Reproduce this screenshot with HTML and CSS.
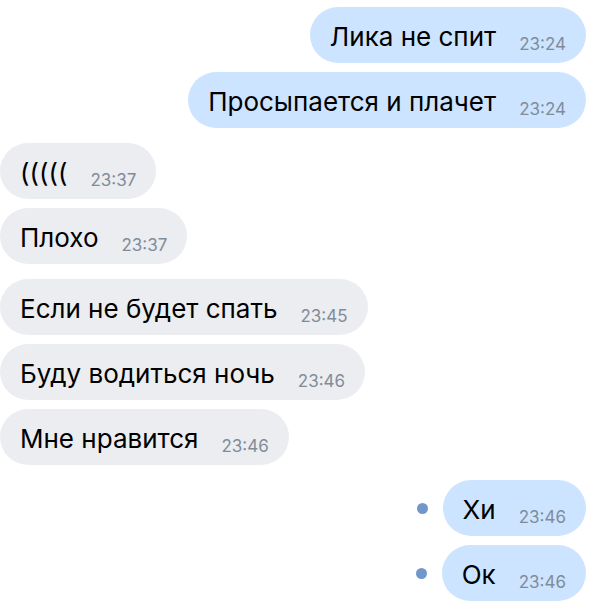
FILE: index.html
```html
<!DOCTYPE html>
<html lang="ru">
<head>
<meta charset="utf-8">
<link rel="stylesheet" href="styles.css">
</head>
<body>
<div class="chat">
  <div class="group">
    <div class="row out"><div class="bubble out-b"><span class="text">Лика не спит</span><span class="time">23:24</span></div></div>
    <div class="row out"><div class="bubble out-b"><span class="text">Просыпается и плачет</span><span class="time">23:24</span></div></div>
  </div>
  <div class="group">
    <div class="row in"><div class="bubble in-b"><span class="text">(((((</span><span class="time">23:37</span></div></div>
    <div class="row in"><div class="bubble in-b"><span class="text">Плохо</span><span class="time">23:37</span></div></div>
  </div>
  <div class="group">
    <div class="row in"><div class="bubble in-b"><span class="text">Если не будет спать</span><span class="time">23:45</span></div></div>
    <div class="row in"><div class="bubble in-b"><span class="text">Буду водиться ночь</span><span class="time">23:46</span></div></div>
    <div class="row in"><div class="bubble in-b"><span class="text">Мне нравится</span><span class="time">23:46</span></div></div>
  </div>
  <div class="group">
    <div class="row out"><span class="dot"></span><div class="bubble out-b"><span class="text">Хи</span><span class="time">23:46</span></div></div>
    <div class="row out"><span class="dot"></span><div class="bubble out-b"><span class="text">Ок</span><span class="time">23:46</span></div></div>
  </div>
</div>
</body>
</html>
```
FILE: styles.css
```css
html, body {
  margin: 0;
  padding: 0;
  background: #ffffff;
}
body {
  font-family: Inter, "Liberation Sans", Arial, sans-serif;
  color: #000000;
}
.chat {
  width: 600px;
  height: 608px;
  box-sizing: border-box;
  padding: 7px 14px 0 0;
  display: flex;
  flex-direction: column;
  gap: 15px;
  overflow: hidden;
}
.group {
  display: flex;
  flex-direction: column;
  gap: 9px;
}
.row {
  display: flex;
  align-items: center;
}
.row.out {
  justify-content: flex-end;
}
.row.in {
  justify-content: flex-start;
}
.bubble {
  height: 56px;
  box-sizing: border-box;
  border-radius: 28px;
  padding: 0 20px;
  display: flex;
  align-items: baseline;
  line-height: 56px;
}
.out-b {
  background: #cce4ff;
}
.in-b {
  background: #ebedf0;
}
.text {
  font-size: 26px;
  position: relative;
  top: 2px;
}
.time {
  font-size: 17px;
  color: #818c99;
  margin-left: 23px;
  position: relative;
  top: 6px;
}
.dot {
  width: 11px;
  height: 11px;
  border-radius: 50%;
  background: #7197cb;
  margin-right: 15px;
}
```
